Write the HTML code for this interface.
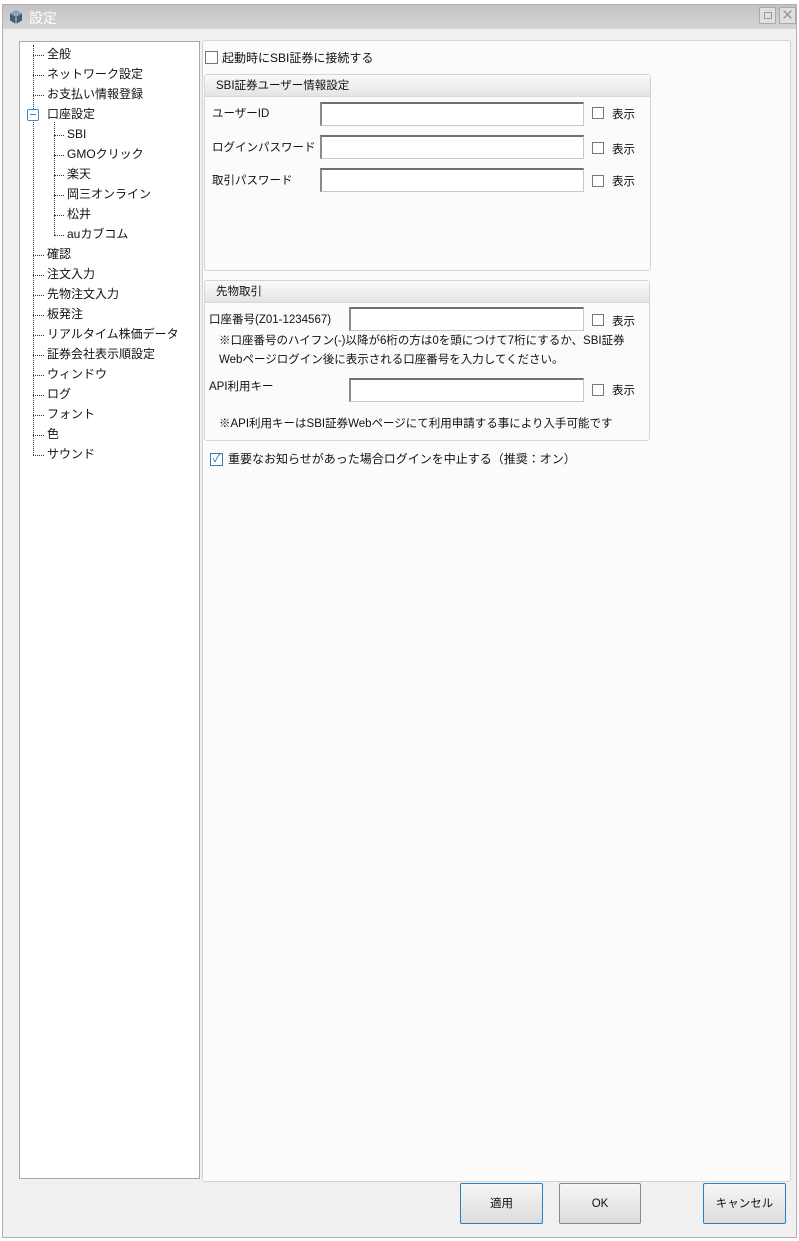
<!DOCTYPE html>
<html><head><meta charset="utf-8"><style>
*{box-sizing:border-box;margin:0;padding:0}
body{width:799px;height:1241px;background:#fff;position:relative;overflow:hidden;font-family:"Liberation Sans","Noto Sans CJK JP",sans-serif;font-size:11.5px;color:#111}
.a{position:absolute}
.win{left:2px;top:4px;width:795px;height:1234px;background:#f0f0f0;border:1px solid #b0b0b0}
.title{left:3px;top:5px;width:793px;height:24px;background:linear-gradient(#c4c4c4,#d4d4d4)}
.t{white-space:nowrap;line-height:16px}
.tree{left:19px;top:41px;width:181px;height:1138px;background:#fff;border:1px solid #a8a8a8}
.panel{left:202px;top:40px;width:589px;height:1142px;background:#fbfbfb;border:1px solid #d4d4d4;border-radius:3px}
.grp{border:1px solid #d4d4d4;border-radius:3px;background:#fbfbfb}
.gh{height:22px;background:linear-gradient(#fafafa,#e4e4e4);border-bottom:1px solid #d8d8d8;padding-left:11px;line-height:22px}
.inp{background:#fff;border:1px solid #c8c8c8;border-top:2px solid #707070;border-left:2px solid #8a8a8a}
.cb{width:12px;height:12px;border:1px solid #777;background:#fff}
.btn{border:1px solid #2a7fc0;border-radius:2px;background:linear-gradient(#f6f6f6,#dcdcdc);text-align:center;line-height:40px;height:41px}
.dv{border-left:1px dotted #333;width:0}
.dh{border-top:1px dotted #333;height:0}
</style></head><body>
<div class="a win"></div>
<div class="a title"></div>
<svg class="a" style="left:8px;top:9px" width="16" height="16" viewBox="0 0 16 16"><path d="M8 1L14 4.5V11.5L8 15L2 11.5V4.5Z" fill="#4a5a70"/><path d="M8 1L14 4.5L8 8L2 4.5Z" fill="#8fa0b8"/><path d="M8 8V15" stroke="#ccd" stroke-width="1"/></svg>
<div class="a t" style="left:29px;top:10px;color:#fff;font-size:14px">設定</div>
<div class="a" style="left:759px;top:7px;width:17px;height:17px;border:1px solid #aaa;background:#e0e0e0"><div class="a" style="left:4px;top:4px;width:8px;height:7px;border:1px solid #999"></div></div>
<div class="a" style="left:779px;top:7px;width:17px;height:17px;border:1px solid #aaa;background:#e0e0e0;color:#999;font-size:15px;line-height:15px;text-align:center">✕</div>

<div class="a tree"></div>
<div class="a dv" style="left:33px;top:45px;height:410px"></div>
<div class="a dv" style="left:54px;top:122px;height:113px"></div>
<div class="a" style="left:27px;top:109px;width:12px;height:12px;border:1px solid #3a8ad0;background:#fff;border-radius:2px"><div class="a" style="left:2px;top:4px;width:6px;height:1px;background:#3a8ad0"></div></div>
<div id="tree"></div>

<div class="a panel"></div>
<div class="a cb" style="left:205px;top:51px;width:13px;height:13px"></div>
<div class="a t" style="left:222px;top:50px;font-size:12px">起動時にSBI証券に接続する</div>

<div class="a grp" style="left:204px;top:74px;width:447px;height:197px"><div class="gh">SBI証券ユーザー情報設定</div></div>
<div class="a t" style="left:212px;top:106px">ユーザーID</div>
<div class="a t" style="left:212px;top:140px">ログインパスワード</div>
<div class="a t" style="left:212px;top:173px">取引パスワード</div>
<div class="a inp" style="left:320px;top:102px;width:264px;height:24px"></div>
<div class="a inp" style="left:320px;top:135px;width:264px;height:24px"></div>
<div class="a inp" style="left:320px;top:168px;width:264px;height:24px"></div>
<div class="a cb" style="left:592px;top:107px"></div><div class="a t" style="left:612px;top:107px">表示</div>
<div class="a cb" style="left:592px;top:142px"></div><div class="a t" style="left:612px;top:142px">表示</div>
<div class="a cb" style="left:592px;top:175px"></div><div class="a t" style="left:612px;top:174px">表示</div>

<div class="a grp" style="left:204px;top:280px;width:446px;height:161px"><div class="gh">先物取引</div></div>
<div class="a t" style="left:209px;top:312px">口座番号(Z01-1234567)</div>
<div class="a inp" style="left:349px;top:307px;width:235px;height:24px"></div>
<div class="a cb" style="left:592px;top:314px"></div><div class="a t" style="left:612px;top:314px">表示</div>
<div class="a t" style="left:219px;top:333px">※口座番号のハイフン(-)以降が6桁の方は0を頭につけて7桁にするか、SBI証券</div>
<div class="a t" style="left:219px;top:352px">Webページログイン後に表示される口座番号を入力してください。</div>
<div class="a t" style="left:209px;top:379px">API利用キー</div>
<div class="a inp" style="left:349px;top:378px;width:235px;height:24px"></div>
<div class="a cb" style="left:592px;top:384px"></div><div class="a t" style="left:612px;top:383px">表示</div>
<div class="a t" style="left:219px;top:416px">※API利用キーはSBI証券Webページにて利用申請する事により入手可能です</div>

<div class="a cb" style="left:210px;top:453px;border-color:#3a7ab8;width:13px;height:13px;color:#2a6ab0;font-size:11px;line-height:11px;text-align:center">✓</div>
<div class="a t" style="left:228px;top:451px;font-size:12px">重要なお知らせがあった場合ログインを中止する（推奨：オン）</div>

<div class="a btn" style="left:460px;top:1183px;width:83px">適用</div>
<div class="a btn" style="left:559px;top:1183px;width:82px;border-color:#888">OK</div>
<div class="a btn" style="left:703px;top:1183px;width:83px">キャンセル</div>

<script>
var items=[["全般",0],["ネットワーク設定",0],["お支払い情報登録",0],["口座設定",0],["SBI",1],["GMOクリック",1],["楽天",1],["岡三オンライン",1],["松井",1],["auカブコム",1],["確認",0],["注文入力",0],["先物注文入力",0],["板発注",0],["リアルタイム株価データ",0],["証券会社表示順設定",0],["ウィンドウ",0],["ログ",0],["フォント",0],["色",0],["サウンド",0]];
var h="";items.forEach(function(it,i){var y=55+i*20;var lx=it[1]?54:33;var tx=it[1]?67:47;
if(i!=3)h+='<div class="a dh" style="left:'+lx+'px;top:'+y+'px;width:'+(tx-lx-3)+'px"></div>';
h+='<div class="a t" style="left:'+tx+'px;top:'+(y-9)+'px;font-size:12px">'+it[0]+'</div>';});
document.getElementById("tree").innerHTML=h;
</script>
</body></html>
